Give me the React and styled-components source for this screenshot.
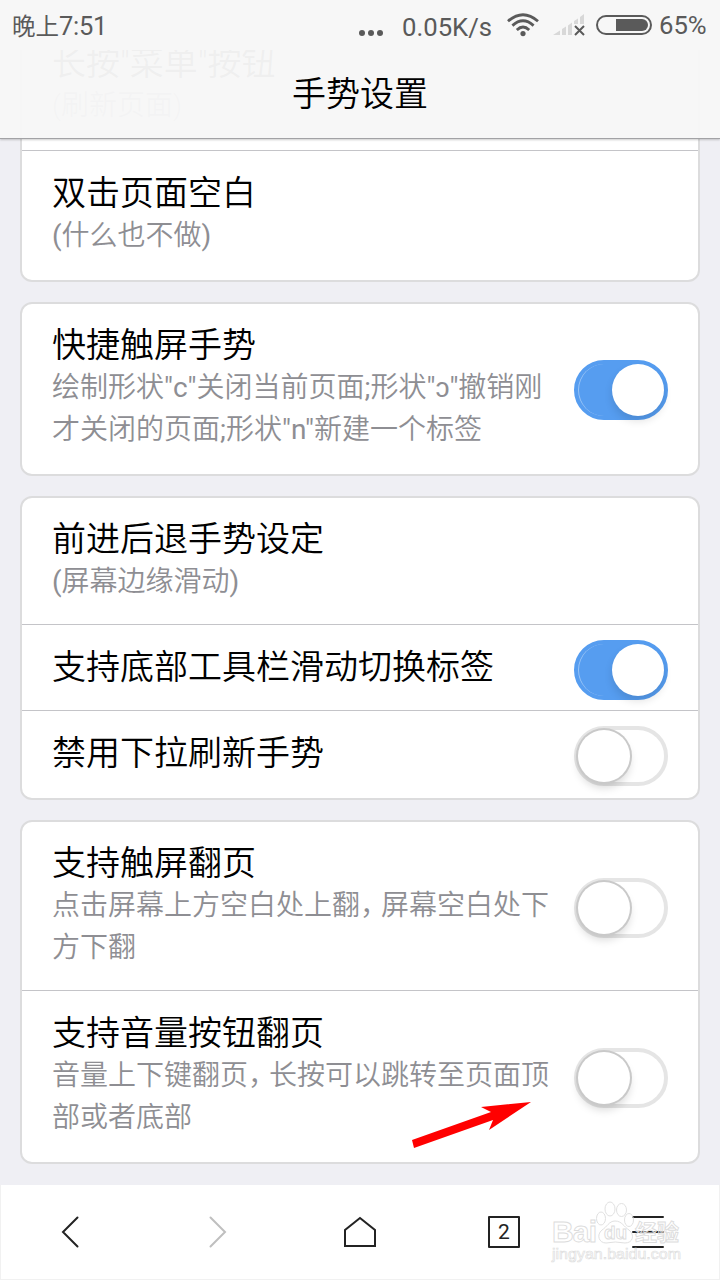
import React from "react";
import styled, { createGlobalStyle } from "styled-components";

const GlobalStyle = createGlobalStyle`
  * { box-sizing: border-box; }
  body {
    margin: 0;
    background: #efeff4;
    font-family: Roboto, "Noto Sans CJK SC", sans-serif;
    font-weight: 350;
  }
`;

const Screen = styled.div`
  position: relative;
  width: 720px;
  height: 1280px;
  overflow: hidden;
  display: flex;
  flex-direction: column;
  background: #efeff4;
`;

const TopOverlay = styled.div`
  position: absolute;
  inset: 0 0 auto 0;
  z-index: 2;
  height: 139px;
  display: flex;
  flex-direction: column;
  border-bottom: 1px solid #a2a2a5;
  box-shadow: 0 1px 2px rgba(0, 0, 0, 0.2);
`;

const StatusBar = styled.div`
  height: 50px;
  flex: none;
  display: flex;
  align-items: center;
  padding: 0 12px;
  background: #f7f7f7;
  color: #5a5a5a;
  font-weight: 400;
  line-height: 50px;
  white-space: nowrap;
`;

const Clock = styled.span`
  flex: 1;
  padding-top: 3px;
  font-size: 23.5px;
  font-weight: 400;
`;

const ClockDigits = styled.span`
  font-size: 25.5px;
  letter-spacing: -0.3px;
`;

const StatusText = styled.span`
  font-size: ${(p) => p.$size}px;
  width: ${(p) => p.$width}px;
  padding-top: ${(p) => p.$drop || 0}px;
`;

const StatusIcon = styled.svg`
  flex: none;
  display: block;
  margin-right: ${(p) => p.$gap}px;
`;

const TitleBar = styled.h1`
  flex: 1;
  margin: 0;
  display: flex;
  justify-content: center;
  align-items: center;
  padding-bottom: 5px;
  background: rgba(247, 247, 247, 0.97);
  font-family: "Noto Sans CJK SC", sans-serif;
  font-size: 34px;
  font-weight: 350;
  line-height: 50px;
  color: #000;
`;

const List = styled.main`
  flex: 1;
  min-height: 0;
  overflow: hidden;
  display: flex;
  flex-direction: column;
  gap: 20px;
  padding: 20px 20px 0;
`;

const Card = styled.section`
  flex: none;
  display: flex;
  flex-direction: column;
  border: 2px solid #dcdcdd;
  border-radius: 12px;
  background: #fff;
`;

const Row = styled.div`
  height: ${(p) => p.$height}px;
  flex: none;
  display: flex;
  justify-content: space-between;
  align-items: flex-start;
  padding: 20px 30px 0;
  & + & {
    padding-top: 21px;
    border-top: 1px solid #c4c4c8;
  }
`;

const Copy = styled.div`
  width: 500px;
  white-space: nowrap;
`;

const Name = styled.div`
  font-size: 34px;
  line-height: 42px;
  margin-bottom: 1px;
  color: #000;
`;

const Note = styled.div`
  font-size: 28px;
  line-height: 42px;
  color: #8e8e93;
`;

const Comma = styled.span`
  letter-spacing: -7px;
`;

const Latin = styled.span`
  font-weight: 400;
`;

const Track = styled.div`
  width: 94px;
  height: 60px;
  flex: none;
  margin-top: ${(p) => p.$top}px;
  border-radius: 30px;
  border: 4px solid ${(p) => (p.$on ? "#569df0" : "#e5e5e5")};
  background: ${(p) => (p.$on ? "#569df0" : "#fff")};
  display: flex;
  justify-content: ${(p) => (p.$on ? "space-between" : "flex-start")};
  align-items: center;
`;

const TrackEdge = styled.div`
  width: 26px;
  height: 52px;
  border-left: 1px solid rgba(255, 255, 255, 0.4);
  border-radius: 26px 0 0 26px;
`;

const Thumb = styled.div`
  width: 52px;
  height: 52px;
  border-radius: 50%;
  background: #fff;
  box-shadow: ${(p) =>
    p.$on
      ? "0 5px 8px rgba(0,0,0,.12)"
      : "0 0 0 2px #c9c9c9, 0 6px 9px rgba(0,0,0,.15)"};
`;

const Toolbar = styled.nav`
  height: 95px;
  flex: none;
  display: grid;
  grid-template-columns: 140px 156px 128px 160px 128px;
  place-items: center;
  padding-bottom: 2px;
  background: #fff;
  box-shadow: inset 1px -1px #f1f1f1, inset -1px 0 #f1f1f1;
`;

const NavIcon = styled.svg`
  display: block;
  fill: none;
  stroke: ${(p) => p.$color || "#232323"};
  stroke-width: 2;
  stroke-linecap: round;
`;

const TabCount = styled.div`
  width: 32px;
  height: 32px;
  border: 2px solid #232323;
  border-radius: 1px;
  display: flex;
  align-items: center;
  justify-content: center;
  padding-top: 1px;
  font: 400 21px Roboto, sans-serif;
  color: #232323;
`;

const Arrow = styled.svg`
  position: absolute;
  left: 410px;
  top: 1098px;
  z-index: 3;
`;

const Watermark = styled.svg`
  position: absolute;
  left: 548px;
  top: 1196px;
  z-index: 3;
  fill: rgba(255, 255, 255, 0.35);
  stroke: #dcdcdc;
  stroke-width: 0.9;
  font-family: "Liberation Sans", "Noto Sans CJK SC", sans-serif;
  font-weight: 700;
`;

function Toggle({ on, top }) {
  return (
    <Track $on={on} $top={top}>
      {on && <TrackEdge />}
      <Thumb $on={on} />
    </Track>
  );
}

function Setting({ height, name, notes = [], toggleTop, on }) {
  return (
    <Row $height={height}>
      <Copy>
        <Name>{name}</Name>
        {notes.map((n, i) => (
          <Note key={i}>{n}</Note>
        ))}
      </Copy>
      {toggleTop !== undefined && <Toggle on={on} top={toggleTop} />}
    </Row>
  );
}

export default function App() {
  return (
    <Screen>
      <GlobalStyle />
      <TopOverlay>
        <StatusBar>
          <Clock>
            晚上<ClockDigits>7:51</ClockDigits>
          </Clock>
          <StatusIcon width="25" height="22" $gap={18}>
            <g fill="#5a5a5a">
              <circle cx="3" cy="19" r="3" />
              <circle cx="12" cy="19" r="3" />
              <circle cx="21" cy="19" r="3" />
            </g>
          </StatusIcon>
          <StatusText $size={25.7} $width={105} $drop={3}>0.05K/s</StatusText>
          <StatusIcon width="32" height="24" viewBox="0 0 32 24" $gap={14}>
            <g fill="none" stroke="#5a5a5a" strokeWidth="2.8">
              <path d="M1 8.2Q16-4.8 31 8.2M5.4 12.6Q16 3 26.6 12.6M9.8 17Q16 11 22.2 17" />
            </g>
            <circle cx="16" cy="20.6" r="2.6" fill="#5a5a5a" />
          </StatusIcon>
          <StatusIcon width="32" height="22" viewBox="0 0 32 22" $gap={11}>
            <path fill="#d8d8d8" d="M0 21L7 16.5V21ZM9 15L13 12.5V21H9ZM15 11.5L19 8.5V21H15ZM21 7L25 4.5V10H21ZM27 3L31 0V10H27Z" />
            <path stroke="#5a5a5a" strokeWidth="2" d="M22 12L31 21M31 12L22 21" />
          </StatusIcon>
          <StatusIcon width="56" height="20" $gap={7}>
            <rect x="1" y="1" width="54" height="18" rx="9" fill="none" stroke="#5a5a5a" strokeWidth="2" />
            <path fill="#5a5a5a" d="M20 4H46a6 6 0 0 1 0 12H20Z" />
          </StatusIcon>
          <StatusText $size={25.7} $width={49}>65%</StatusText>
        </StatusBar>
        <TitleBar>手势设置</TitleBar>
      </TopOverlay>

      <List>
        <Card>
          <Setting height={128} name={'长按"菜单"按钮'} notes={["(刷新页面)"]} />
          <Setting
            height={130}
            name="双击页面空白"
            notes={[<><Latin>(</Latin>什么也不做<Latin>)</Latin></>]}
          />
        </Card>
        <Card>
          <Setting
            height={170}
            name="快捷触屏手势"
            notes={[
              <>绘制形状<Latin>"c"</Latin>关闭当前页面<Latin>;</Latin>形状<Latin>"ɔ"</Latin>撤销刚</>,
              <>才关闭的页面<Latin>;</Latin>形状<Latin>"n"</Latin>新建一个标签</>,
            ]}
            toggleTop={36}
            on
          />
        </Card>
        <Card>
          <Setting
            height={126}
            name="前进后退手势设定"
            notes={[<><Latin>(</Latin>屏幕边缘滑动<Latin>)</Latin></>]}
          />
          <Setting height={86} name="支持底部工具栏滑动切换标签" toggleTop={-6} on />
          <Setting height={88} name="禁用下拉刷新手势" toggleTop={-6} />
        </Card>
        <Card>
          <Setting
            height={168}
            name="支持触屏翻页"
            notes={[<>点击屏幕上方空白处上翻<Comma>，</Comma>屏幕空白处下</>, "方下翻"]}
            toggleTop={36}
          />
          <Setting
            height={172}
            name="支持音量按钮翻页"
            notes={[<>音量上下键翻页<Comma>，</Comma>长按可以跳转至页面顶</>, "部或者底部"]}
            toggleTop={36}
          />
        </Card>
      </List>

      <Toolbar>
        <NavIcon width="18" height="32" viewBox="0 0 18 32">
          <path d="M16.5 1.5L2 16L16.5 30.5" />
        </NavIcon>
        <NavIcon width="18" height="32" viewBox="0 0 18 32" $color="#bfbfbf">
          <path d="M1.5 1.5L16 16L1.5 30.5" />
        </NavIcon>
        <NavIcon width="34" height="32" viewBox="0 0 34 32">
          <path d="M17 2L32 14V30H2V14Z" />
        </NavIcon>
        <TabCount>2</TabCount>
        <NavIcon width="32" height="32" viewBox="0 0 32 32">
          <path d="M1 1H31M1 16H31M1 31H31" />
        </NavIcon>
      </Toolbar>

      <Arrow width="124" height="54" viewBox="0 0 124 54">
        <path fill="#f00" d="M121 4L79 32L83 22L4 50L2 42L81 14L71 9Z" />
      </Arrow>
      <Watermark width="140" height="72" viewBox="0 0 140 72">
        <text x="4" y="46" fontSize="30" textLength="45">Bai</text>
        <ellipse cx="53" cy="22.5" rx="4.5" ry="6.5" />
        <ellipse cx="62" cy="13" rx="5" ry="7" />
        <ellipse cx="73.5" cy="14" rx="5" ry="6.5" />
        <ellipse cx="81" cy="24" rx="4.5" ry="6.5" />
        <path d="M67 25C61 25 59 31 54 34C48 39 51 47 58 47Q67 45 77 47C85 47 87 39 81 34C76 31 74 25 67 25Z" />
        <text x="56" y="43" fontSize="19" textLength="23">du</text>
        <text x="87" y="44" fontSize="22" textLength="44">经验</text>
        <text x="4" y="63" fontSize="14.5" textLength="129" fontWeight="400" strokeWidth="0.6" lengthAdjust="spacingAndGlyphs">
          jingyan.baidu.com
        </text>
      </Watermark>
    </Screen>
  );
}
